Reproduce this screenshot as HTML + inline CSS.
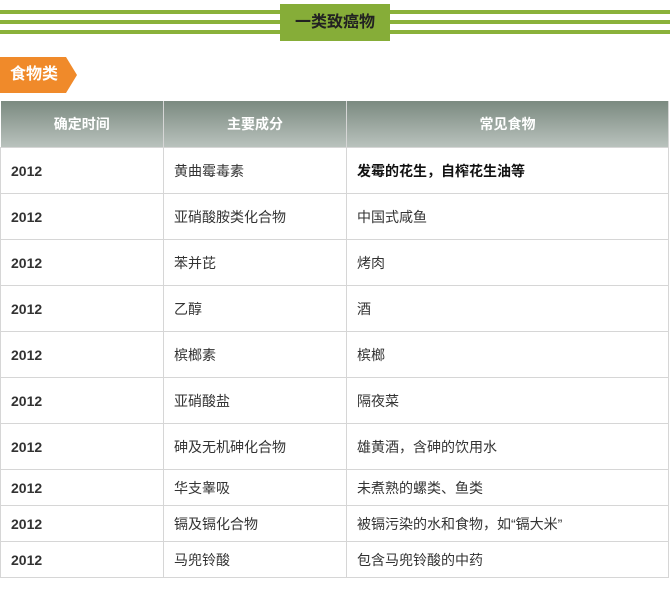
<!DOCTYPE html>
<html><head><meta charset="utf-8"><style>
body{margin:0;width:670px;height:597px;background:#fff;font-family:"Liberation Sans","Noto Sans CJK SC",sans-serif;position:relative;overflow:hidden}
.s{position:absolute;left:0;width:670px;height:4px;background:#8ab13a}
.title{position:absolute;left:280px;top:4px;width:110px;height:37px;background:#86ad38;color:#222;font-size:16px;font-weight:bold;text-align:center;line-height:37px}
.tag{position:absolute;left:0;top:57px;width:66px;height:36px;background:#f08a2a;color:#fff;font-weight:bold;font-size:16px;line-height:36px;padding-left:10px;box-sizing:border-box}
.tag:after{content:"";position:absolute;left:66px;top:0;border-left:11px solid #f08a2a;border-top:18px solid transparent;border-bottom:18px solid transparent}
table{position:absolute;left:0;top:101px;width:669px;border-collapse:collapse;font-size:14px;color:#333;table-layout:fixed}
th{height:46px;background:linear-gradient(#7b8a80,#b9c2bd);color:#fff;font-weight:bold;border-right:1px solid #d6d6d6;padding:0;font-size:14px}
td{border:1px solid #d6d6d6;padding:0 0 0 10px}
td:first-child{font-weight:bold;font-family:"Liberation Sans",sans-serif}
tr.a td{height:45px}tr.b td{height:35px}
</style></head><body>
<div class="s" style="top:10px"></div><div class="s" style="top:20px"></div><div class="s" style="top:30px"></div>
<div class="title">一类致癌物</div>
<div class="tag">食物类</div>
<table>
<colgroup><col style="width:163px"><col style="width:183px"><col></colgroup>
<tr><th>确定时间</th><th>主要成分</th><th>常见食物</th></tr>
<tr class="a"><td>2012</td><td>黄曲霉毒素</td><td style="font-weight:bold;color:#111">发霉的花生，自榨花生油等</td></tr>
<tr class="a"><td>2012</td><td>亚硝酸胺类化合物</td><td>中国式咸鱼</td></tr>
<tr class="a"><td>2012</td><td>苯并芘</td><td>烤肉</td></tr>
<tr class="a"><td>2012</td><td>乙醇</td><td>酒</td></tr>
<tr class="a"><td>2012</td><td>槟榔素</td><td>槟榔</td></tr>
<tr class="a"><td>2012</td><td>亚硝酸盐</td><td>隔夜菜</td></tr>
<tr class="a"><td>2012</td><td>砷及无机砷化合物</td><td>雄黄酒，含砷的饮用水</td></tr>
<tr class="b"><td>2012</td><td>华支睾吸</td><td>未煮熟的螺类、鱼类</td></tr>
<tr class="b"><td>2012</td><td>镉及镉化合物</td><td>被镉污染的水和食物，如“镉大米”</td></tr>
<tr class="b"><td>2012</td><td>马兜铃酸</td><td>包含马兜铃酸的中药</td></tr>
</table>
</body></html>
